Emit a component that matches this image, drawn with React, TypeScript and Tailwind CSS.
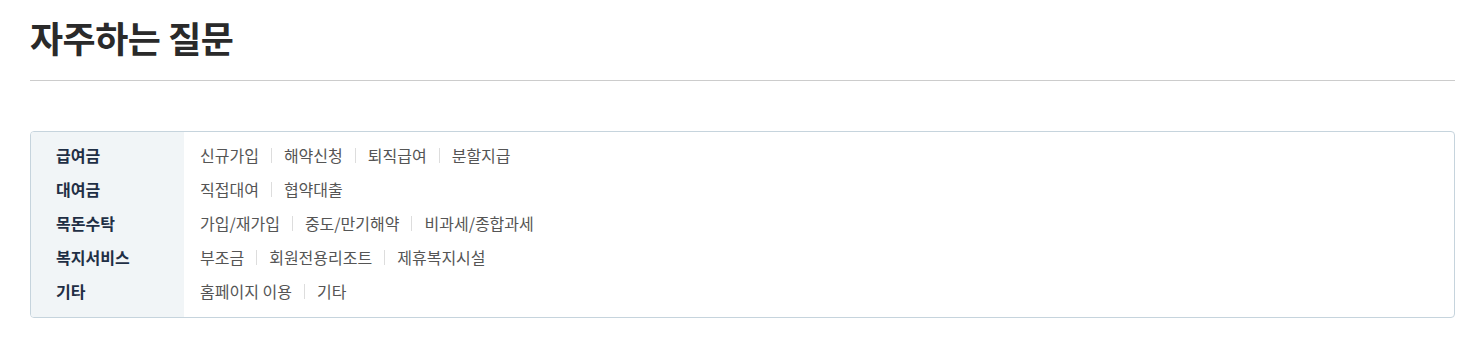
const FAQ_GROUPS = [
  { id: 1, name: "급여금", items: ["신규가입", "해약신청", "퇴직급여", "분할지급"] },
  { id: 2, name: "대여금", items: ["직접대여", "협약대출"] },
  { id: 3, name: "목돈수탁", items: ["가입/재가입", "중도/만기해약", "비과세/종합과세"] },
  { id: 4, name: "복지서비스", items: ["부조금", "회원전용리조트", "제휴복지시설"] },
  { id: 5, name: "기타", items: ["홈페이지 이용", "기타"] },
];

export default function App() {
  return (
    <div
      className="bg-white px-[30px] pt-[12px] min-h-[342px]"
      style={{ fontFamily: '"Noto Sans CJK KR", "Noto Sans", sans-serif' }}
    >
      <div className="w-[1425px]">
        <h2 className="text-[36px] leading-[50px] font-bold text-[#2a2a2a] tracking-[-0.5px]">
          자주하는 질문
        </h2>
        <div className="mt-[18px] h-px bg-[#cccccc]" />

        <div className="mt-[50px] flex rounded-[4px] border border-[#c6d4dd] overflow-hidden">
          <div className="w-[153px] shrink-0 bg-[#f1f5f7] pt-[6px] pb-[9px] pl-[25px]">
            {FAQ_GROUPS.map((group) => (
              <div
                key={group.id}
                className="h-[34px] leading-[34px] text-[16px] font-bold text-[#1f2f45]"
              >
                {group.name}
              </div>
            ))}
          </div>
          <div className="flex-1 pt-[6px] pb-[9px] pl-4">
            {FAQ_GROUPS.map((group) => (
              <div key={group.id} className="h-[34px] flex items-center">
                {group.items.map((item, index) => (
                  <div key={index} className="flex items-center">
                    {index > 0 && (
                      <span className="ml-[12px] mr-[12px] h-[15px] w-px bg-[#dddddd]" />
                    )}
                    <a href="#" className="text-[16px] text-[#555] leading-[34px]">
                      {item}
                    </a>
                  </div>
                ))}
              </div>
            ))}
          </div>
        </div>
      </div>
    </div>
  );
}
